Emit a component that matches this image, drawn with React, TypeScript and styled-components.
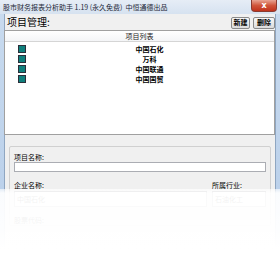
import styled, {createGlobalStyle} from 'styled-components'

const GlobalStyle = createGlobalStyle`
  html, body {
    margin: 0;
    padding: 0;
    background: #ffffff;
  }
  body {
    font-family: "Noto Sans CJK SC", "Noto Sans", sans-serif;
  }
`

const Window = styled.div`
  position: relative;
  width: 280px;
  height: 270px;
  overflow: hidden;
  display: flex;
  flex-direction: column;
  background: linear-gradient(#c9dbef, #b6cde9);
`

const TitleBar = styled.div`
  height: 14px;
  flex: none;
  display: flex;
  align-items: flex-start;
  justify-content: space-between;
  background: linear-gradient(#e6edf6, #d6e2f0);
`

const Title = styled.span`
  padding: 3px 0 0 3px;
  font-size: 7px;
  line-height: 9px;
  color: #1e2838;
  white-space: nowrap;
`

const CloseButton = styled.div`
  width: 26px;
  height: 12px;
  margin-right: 3px;
  border: 1px solid #8a3a30;
  border-top: none;
  border-radius: 0 0 4px 4px;
  background: linear-gradient(#e8a493, #d0553b 50%, #c0321c);
  color: #fff;
  font: bold 8px/11px "DejaVu Sans", sans-serif;
  text-align: center;
  box-sizing: border-box;
`

const Client = styled.div`
  flex: 1;
  margin: 0 4px;
  display: flex;
  flex-direction: column;
  background: #f0f0f0;
  border-left: 1px solid #8fa6c1;
  border-right: 1px solid #8fa6c1;
`

const Header = styled.div`
  height: 16px;
  flex: none;
  display: flex;
  align-items: center;
  justify-content: space-between;
  padding: 0 0 0 2px;
`

const HeaderLabel = styled.span`
  font-size: 10px;
  line-height: 12px;
  color: #000;
`

const ButtonGroup = styled.div`
  display: flex;
  gap: 3px;
  align-items: center;
  margin-top: 1px;
`

const ToolButton = styled.button<{$w: number}>`
  width: ${(p) => p.$w}px;
  height: 12px;
  padding: 0;
  border: 1px solid #8a8a8a;
  border-radius: 2px;
  background: linear-gradient(#f6f6f6, #dcdcdc);
  font: bold 7px/9px "Noto Sans CJK SC", sans-serif;
  color: #000;
`

const ListBox = styled.div`
  height: 105px;
  flex: none;
  background: #fff;
  border: 1px solid #a0a0a0;
  margin-left: -1px;
  box-sizing: border-box;
`

const ListHeader = styled.div`
  height: 10px;
  border-bottom: 1px solid #d5d5d5;
  text-align: center;
  font-size: 7px;
  line-height: 10px;
  color: #222;
  background: linear-gradient(#ffffff, #f4f5f7);
`

const Rows = styled.div`
  padding-top: 2px;
`

const Row = styled.div`
  height: 10px;
  display: grid;
  grid-template-columns: 25px 1fr;
  align-items: center;
  padding-right: 5px;
`

const RowIcon = styled.span`
  width: 8px;
  height: 8px;
  margin-left: 13px;
  box-sizing: border-box;
  border: 1px solid #2b2f3a;
  background: #0f7f7c;
`

const RowText = styled.span`
  text-align: center;
  font-size: 7px;
  font-weight: bold;
  line-height: 10px;
  color: #000;
`

const GroupBox = styled.div`
  margin: 11px 4px 0 4px;
  padding: 4px 4px 0 4px;
  border: 1px solid #d0d0d0;
  border-radius: 2px;
  display: flex;
  flex-direction: column;
`

const FieldLabel = styled.div`
  font-size: 7px;
  line-height: 10px;
  color: #000;
  padding-top: 1px;
`

const TextInput = styled.div`
  height: 10px;
  background: #fff;
  border: 1px solid #abadb3;
  box-sizing: border-box;
`

const FieldGrid = styled.div`
  display: grid;
  grid-template-columns: 1fr 54px;
  column-gap: 5px;
  margin-top: 7px;
`

const Field = styled.div`
  display: flex;
  flex-direction: column;
  gap: 1px;
`

const FilledInput = styled.div`
  height: 16px;
  background: #fff;
  border: 1px solid #abadb3;
  box-sizing: border-box;
  font-size: 7px;
  line-height: 14px;
  padding-left: 2px;
  color: #333;
`

const Fade = styled.div`
  position: absolute;
  left: 0;
  right: 0;
  top: 189px;
  bottom: 0;
  background: linear-gradient(
    rgba(255, 255, 255, 0.6),
    rgba(255, 255, 255, 0.93) 4px,
    rgba(255, 255, 255, 0.96) 40px,
    #ffffff 60px
  );
`

const projects = ['中国石化', '万科', '中国联通', '中国国贸']

export default function App() {
  return (
    <>
      <GlobalStyle />
      <Window>
        <TitleBar>
          <Title>股市财务报表分析助手 1.19 (永久免费)&nbsp;&nbsp;中恒通德出品</Title>
          <CloseButton>x</CloseButton>
        </TitleBar>
        <Client>
          <Header>
            <HeaderLabel>项目管理:</HeaderLabel>
            <ButtonGroup>
              <ToolButton $w={19}>新建</ToolButton>
              <ToolButton $w={22}>删除</ToolButton>
            </ButtonGroup>
          </Header>
          <ListBox>
            <ListHeader>项目列表</ListHeader>
            <Rows>
              {projects.map((name) => (
                <Row key={name}>
                  <RowIcon />
                  <RowText>{name}</RowText>
                </Row>
              ))}
            </Rows>
          </ListBox>
          <GroupBox>
            <FieldLabel>项目名称:</FieldLabel>
            <TextInput />
            <FieldGrid>
              <Field>
                <FieldLabel>企业名称:</FieldLabel>
                <FilledInput>中国石化</FilledInput>
              </Field>
              <Field>
                <FieldLabel>所属行业:</FieldLabel>
                <FilledInput>石油化工</FilledInput>
              </Field>
            </FieldGrid>
            <FieldGrid>
              <Field>
                <FieldLabel>股票代码:</FieldLabel>
              </Field>
            </FieldGrid>
          </GroupBox>
        </Client>
        <Fade />
      </Window>
    </>
  )
}
